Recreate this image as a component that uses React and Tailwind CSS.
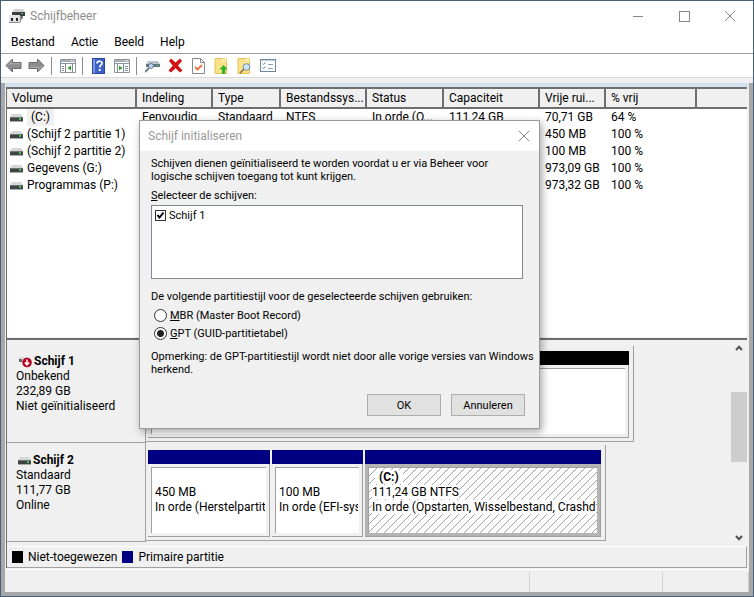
import React, { useState } from 'react';

const VOLUMES = [
  { name: '(C:)', layout: 'Eenvoudig', type: 'Standaard', fs: 'NTFS', status: 'In orde (O...', capacity: '111,24 GB', free: '70,71 GB', pct: '64 %', selected: true },
  { name: '(Schijf 2 partitie 1)', free: '450 MB', pct: '100 %' },
  { name: '(Schijf 2 partitie 2)', free: '100 MB', pct: '100 %' },
  { name: 'Gegevens (G:)', free: '973,09 GB', pct: '100 %' },
  { name: 'Programmas (P:)', free: '973,32 GB', pct: '100 %' },
];

const COLUMNS = [
  { label: 'Volume', width: 'w-[129px]' },
  { label: 'Indeling', width: 'w-[76px]' },
  { label: 'Type', width: 'w-[68px]' },
  { label: 'Bestandssys...', width: 'w-[86px]' },
  { label: 'Status', width: 'w-[77px]' },
  { label: 'Capaciteit', width: 'w-[96px]' },
  { label: 'Vrije rui...', width: 'w-[66px]' },
  { label: '% vrij', width: 'w-[91px]' },
  { label: '', width: '' },
];

// --- Icons ---
const DriveIcon = () => (
  <svg width="13" height="8" viewBox="0 0 13 8" className="shrink-0" aria-hidden="true">
    <path d="M2 0h9l2 3H0z" fill="#d4d7d7" />
    <rect y="3" width="13" height="4" fill="#3d4443" />
    <rect y="3" width="13" height="1" fill="#6d7473" />
    <rect x="9" y="4" width="2" height="2" fill="#42c04b" />
    <rect y="7" width="13" height="1" fill="#a8acac" />
  </svg>
);

const UnknownDriveIcon = () => (
  <svg width="14" height="12" viewBox="0 0 14 12" className="shrink-0" aria-hidden="true">
    <path d="M1 1h11v3H0z" fill="#dcdcdc" />
    <rect x="1" y="3" width="3" height="3" fill="#666" />
    <circle cx="9" cy="6.5" r="4.8" fill="#b4001e" />
    <path d="M9 3.4v5M6.8 6.4L9 8.8l2.2-2.4" stroke="#fff" strokeWidth="1.5" fill="none" />
  </svg>
);

const AppIcon = () => (
  <svg width="16" height="16" viewBox="0 0 16 16" aria-hidden="true">
    <path d="M5 1h9l2 3H3z" fill="#d2d2d2" />
    <path d="M3 4h13v4H3z" fill="#3b3f3f" />
    <rect x="12" y="5" width="2" height="1" fill="#37c978" />
    <path d="M0 7h11v8H0z" fill="#e3e3e3" />
    <path d="M0 14h11v1H0zM11 8h1v6h-1z" fill="#8a8a8a" />
    <path d="M2 10h2v3H2zM7 10h2v3H7z" fill="#222" />
    <path d="M12 8h2v2l-2 2z" fill="#777" />
  </svg>
);

const Arrow = ({ flip }) => (
  <svg width="17" height="15" viewBox="0 0 17 15" className={flip ? 'rotate-180' : ''} aria-hidden="true">
    <path d="M1 7.5L7.5 1v3.5H16v6H7.5V14z" fill="#8e8e8e" stroke="#6a6a6a" />
    <path d="M3 7.3L6.5 3.8v1.9H15" fill="none" stroke="#b0b0b0" />
  </svg>
);

const TreePane = ({ right }) => (
  <svg width="16" height="14" viewBox="0 0 16 14" aria-hidden="true">
    <path d="M.5 .5h15v13H.5z" fill="#fff" stroke="#8c939b" />
    <path d="M1 1h14v2H1z" fill="#a9b0b8" />
    <path d="M11 1h1v1h-1zM13 1h1v1h-1z" fill="#fff" />
    <path d="M1 4.5h14" stroke="#8693a3" />
    <path d={right ? 'M3.5 5v8M9.5 5v8M11 7.5h3M11 9.5h3M11 11.5h3' : 'M5.5 5v8M12.5 5v8M2 7.5h2M2 9.5h2M2 11.5h2'} stroke="#7b8ba0" />
    <path d={right ? 'M5 6.5v5l3.5-2.5z' : 'M11 6.5v5L7.5 9z'} fill="#35a02f" />
  </svg>
);

const HelpIcon = () => (
  <svg width="13" height="16" viewBox="0 0 13 16" aria-hidden="true">
    <rect x=".5" y=".5" width="12" height="15" fill="#3d62c5" stroke="#28479c" />
    <path d="M1 1h2v14H1z" fill="#7d99e2" />
    <path d="M5 5.4C5 2.4 10 2.6 10 5.4 10 7.3 7.6 7.2 7.6 9.6" fill="none" stroke="#fff" strokeWidth="1.7" />
    <rect x="6.7" y="11" width="2" height="2" fill="#fff" />
  </svg>
);

const ConnectIcon = () => (
  <svg width="15" height="14" viewBox="0 0 15 14" aria-hidden="true">
    <path d="M3 2h10l2 3H1z" fill="#bac4ca" />
    <path d="M1 5h14v3H1z" fill="#66747d" />
    <rect x="12" y="6" width="2" height="1" fill="#3ebd49" />
    <circle cx="6" cy="7" r="2.5" fill="#b7dbf1" stroke="#557" strokeWidth=".7" />
    <path d="M4 9l-4 4" stroke="#617986" strokeWidth="1.8" />
  </svg>
);

const DeleteIcon = () => (
  <svg width="15" height="15" viewBox="0 0 15 15" aria-hidden="true">
    <path d="M1 3l2-2.5 4.5 4L12 .5 14 3l-4 4.5 4.5 5-2.5 2-4.5-4.2L3 14.5l-2.5-2 4.3-5z" fill="#d01212" />
  </svg>
);

const CheckDocIcon = () => (
  <svg width="13" height="16" viewBox="0 0 13 16" aria-hidden="true">
    <path d="M.5 .5h8l4 4v11H.5z" fill="#fff" stroke="#85898d" />
    <path d="M8.5 .5v4h4" fill="none" stroke="#85898d" />
    <path d="M3 9l2.5 2.5L10 7" fill="none" stroke="#e4703c" strokeWidth="1.8" />
  </svg>
);

const FolderIcon = ({ search }) => (
  <svg width="15" height="16" viewBox="0 0 15 16" aria-hidden="true">
    <path d="M1 .5h11.5v15H1z" fill="#f9e28a" stroke="#e3c258" />
    <path d="M8 .5h4.5v3H8z" fill="#fcefb5" />
    {search ? (
      <g>
        <path d="M7 11l-4 4" stroke="#816f4a" strokeWidth="1.6" />
        <circle cx="9.5" cy="9" r="3.3" fill="#cee7f8" stroke="#758da4" />
      </g>
    ) : (
      <path d="M9.5 7l4.2 4.5h-2.5V16H8v-4.5H5.3z" fill="#34b425" />
    )}
  </svg>
);

const ListIcon = () => (
  <svg width="16" height="13" viewBox="0 0 16 13" aria-hidden="true">
    <rect x=".5" y=".5" width="15" height="12" fill="#fff" stroke="#73889b" />
    <path d="M1 1h14v1H1z" fill="#c3cfda" />
    <path d="M2.5 4.5l1 1 2-2M2.5 8.5l1 1 2-2" fill="none" stroke="#4389cc" />
    <path d="M8 5.5h5M8 9.5h5" stroke="#90a0ad" />
  </svg>
);

const CloseIcon = () => (
  <svg width="12" height="12" viewBox="0 0 12 12" stroke="#888" aria-hidden="true">
    <path d="M1 1l10 10M11 1L1 11" />
  </svg>
);

const Chevron = ({ down }) => (
  <svg width="8" height="6" viewBox="0 0 8 6" className={down ? 'rotate-180' : ''} aria-hidden="true">
    <path d="M1 5l3-3.2L7 5" fill="none" stroke="#505050" strokeWidth="2" />
  </svg>
);

// --- Toolbar ---
const ToolButton = ({ label, children }) => (
  <button type="button" aria-label={label} className="flex w-[23px] items-center justify-center">
    {children}
  </button>
);

const Divider = () => <span className="mr-1 ml-[3px] h-[18px] w-px bg-[#8c8c8c]" />;

const Toolbar = () => (
  <div className="flex h-6 items-center border-b border-[#d9d9d9] pl-px">
    <ToolButton label="Vorige"><Arrow /></ToolButton>
    <ToolButton label="Volgende"><Arrow flip /></ToolButton>
    <Divider />
    <ToolButton label="Structuur weergeven"><TreePane /></ToolButton>
    <Divider />
    <ToolButton label="Help"><HelpIcon /></ToolButton>
    <ToolButton label="Actievenster weergeven"><TreePane right /></ToolButton>
    <Divider />
    <ToolButton label="Vernieuwen"><ConnectIcon /></ToolButton>
    <ToolButton label="Verwijderen"><DeleteIcon /></ToolButton>
    <ToolButton label="Eigenschappen"><CheckDocIcon /></ToolButton>
    <ToolButton label="Openen"><FolderIcon /></ToolButton>
    <ToolButton label="Verkennen"><FolderIcon search /></ToolButton>
    <ToolButton label="Instellingen"><ListIcon /></ToolButton>
  </div>
);

// --- Volume list ---
const VolumeTable = () => (
  <table className="w-full table-fixed border-collapse text-left whitespace-nowrap">
    <thead>
      <tr className="h-5 border-y-2 border-[#6e6e6e] bg-[#f0f0f0]">
        {COLUMNS.map((c, i) => (
          <th key={i} className={`${c.width} overflow-hidden border-r-2 border-[#6e6e6e] pl-[5px] font-normal last:border-r-0`}>
            {c.label}
          </th>
        ))}
      </tr>
    </thead>
    <tbody>
      {VOLUMES.map((v) => (
        <tr key={v.name} className="h-[17px]">
          <td className="pl-[3px]">
            <span className="flex items-center gap-1">
              <DriveIcon />
              <span className={v.selected ? 'bg-[#f0f0f0] px-1' : ''}>{v.name}</span>
            </span>
          </td>
          <td className="pl-[6px]">{v.layout}</td>
          <td className="pl-[6px]">{v.type}</td>
          <td className="pl-[6px]">{v.fs}</td>
          <td className="pl-[6px]">{v.status}</td>
          <td className="pl-[6px]">{v.capacity}</td>
          <td className="pl-[6px]">{v.free}</td>
          <td className="pl-[6px]">{v.pct}</td>
          <td />
        </tr>
      ))}
    </tbody>
  </table>
);

// --- Graphical disk view ---
const DiskRow = ({ icon, name, lines, width, children }) => (
  <div className="flex h-[99px]">
    <div className="w-[139px] shrink-0 border-r border-b border-[#a0a0a0] pt-[10px] pl-[9px] leading-[15px]">
      <div className="flex items-center gap-[2px] pl-[2px] font-bold">{icon}{name}</div>
      {lines.map((l) => <div key={l}>{l}</div>)}
    </div>
    <div className={`${width} mt-[2px] mb-px flex gap-[2px] border-r border-b border-[#a0a0a0] pt-[5px] pr-1 pb-[3px] pl-[2px]`}>
      {children}
    </div>
  </div>
);

const Partition = ({ grow, bar, active, title, lines = [] }) => (
  <div className={`${grow} flex min-w-0 flex-col`}>
    <div className={`h-[14px] ${bar}`} />
    <div className={`flex-1 border-r border-b border-[#a0a0a0] p-[3px] ${active ? 'bg-[#b4b4b4]' : ''}`}>
      <div className={`flex h-full flex-col border-t border-l border-[#a0a0a0] bg-white pt-[2px] pr-px pl-[3px] leading-[15px] whitespace-nowrap ${active ? 'bg-[linear-gradient(135deg,#fff_0_45%,#a0a0a0_45%_55%,#fff_55%)] bg-[size:8px_8px]' : ''}`}>
        <div className="h-[15px] pl-[3px] font-bold">{title && <span className="bg-white px-1">{title}</span>}</div>
        {lines.map((l) => (
          <div key={l} className="overflow-hidden"><span className="bg-white">{l}</span></div>
        ))}
      </div>
    </div>
  </div>
);

const DiskPane = () => (
  <div className="flex">
    <div className="min-w-0 flex-1 py-1">
      <DiskRow icon={<UnknownDriveIcon />} name="Schijf 1" lines={['Onbekend', '232,89 GB', 'Niet geïnitialiseerd']} width="w-[488px]">
        <Partition grow="flex-1" bar="bg-black" />
      </DiskRow>
      <DiskRow icon={<DriveIcon />} name="Schijf 2" lines={['Standaard', '111,77 GB', 'Online']} width="w-[460px]">
        <Partition grow="w-[122px]" bar="bg-[#000080]" lines={['450 MB', 'In orde (Herstelpartit']} />
        <Partition grow="w-[91px]" bar="bg-[#000080]" lines={['100 MB', 'In orde (EFI-sys']} />
        <Partition grow="flex-1" bar="bg-[#000080]" active title="(C:)" lines={['111,24 GB NTFS', 'In orde (Opstarten, Wisselbestand, Crashdu']} />
      </DiskRow>
    </div>
    <div className="flex w-4 flex-col items-center">
      <button type="button" aria-label="Omhoog schuiven" className="flex h-4 items-center"><Chevron /></button>
      <div className="h-9" />
      <div className="h-[70px] w-full bg-[#cdcdcd]" />
      <div className="flex-1" />
      <button type="button" aria-label="Omlaag schuiven" className="flex h-4 items-center"><Chevron down /></button>
    </div>
  </div>
);

// --- Dialog ---
const InitDialog = () => {
  const [checked, setChecked] = useState(true);
  const [style, setStyle] = useState('gpt');
  const radio = 'h-[13px] w-[13px] appearance-none rounded-full border border-[#333] bg-white checked:bg-[radial-gradient(circle,#222_0_3px,#fff_4px)]';
  const button = 'h-[22px] w-[74px] border border-[#adadad] bg-[#e1e1e1]';

  return (
    <div role="dialog" aria-labelledby="init-title" className="absolute top-[119px] left-[138px] w-[401px] border border-[#9a9a9a] bg-[#f0f0f0] text-[11px] leading-[13px] shadow-[2px_3px_8px_rgba(0,0,0,0.35)]">
      <div className="flex h-[30px] items-center justify-between bg-white pr-[9px] pl-2">
        <h2 id="init-title" className="text-[12px] text-[#999]">Schijf initialiseren</h2>
        <button type="button" aria-label="Sluiten"><CloseIcon /></button>
      </div>
      <div className="pt-[6px] pb-3 pl-[11px]">
        <p>Schijven dienen geïnitialiseerd te worden voordat u er via Beheer voor<br />logische schijven toegang tot kunt krijgen.</p>
        <p className="mt-[6px]"><u>S</u>electeer de schijven:</p>
        <div className="mt-[3px] mr-4 h-[74px] border border-[#828790] bg-white p-[3px]">
          <label className="flex items-center gap-[3px]">
            <span className="relative flex">
              <input type="checkbox" checked={checked} onChange={() => setChecked(!checked)} className="h-[11px] w-[11px] appearance-none border border-[#333] bg-white" />
              {checked && (
                <svg width="11" height="11" viewBox="0 0 11 11" className="pointer-events-none absolute inset-0">
                  <path d="M2.5 5l2 2.5 4-5" fill="none" stroke="#000" strokeWidth="2" />
                </svg>
              )}
            </span>
            Schijf 1
          </label>
        </div>
        <fieldset>
          <legend className="pt-[11px]">De volgende partitiestijl voor de geselecteerde schijven gebruiken:</legend>
          <div className="flex flex-col gap-[5px] pt-[6px] pl-[3px]">
            <label className="flex items-center gap-[3px]">
              <input type="radio" name="style" checked={style === 'mbr'} onChange={() => setStyle('mbr')} className={radio} />
              <span><u>M</u>BR (Master Boot Record)</span>
            </label>
            <label className="flex items-center gap-[3px]">
              <input type="radio" name="style" checked={style === 'gpt'} onChange={() => setStyle('gpt')} className={radio} />
              <span><u>G</u>PT (GUID-partitietabel)</span>
            </label>
          </div>
        </fieldset>
        <p className="mt-[10px]">Opmerking: de GPT-partitiestijl wordt niet door alle vorige versies van Windows<br />herkend.</p>
        <div className="mt-[18px] mr-[14px] flex justify-end gap-[10px]">
          <button type="button" className={button}>OK</button>
          <button type="button" className={button}>Annuleren</button>
        </div>
      </div>
    </div>
  );
};

const App = () => (
  <div className="relative flex min-h-screen flex-col border border-[#49607c] bg-white font-[Roboto,sans-serif] text-[12px] leading-[17px] text-black">
    <header className="flex h-[30px] items-center justify-between pr-[17px] pl-2">
      <div className="flex items-center gap-[5px]">
        <AppIcon />
        <h1 className="text-[#8c8c8c]">Schijfbeheer</h1>
      </div>
      <div className="flex items-center gap-[34px]">
        <button type="button" aria-label="Minimaliseren" className="flex h-3 w-3 items-center"><span className="h-px w-[10px] bg-[#888]" /></button>
        <button type="button" aria-label="Maximaliseren" className="h-[11px] w-[11px] border border-[#888]" />
        <button type="button" aria-label="Sluiten"><CloseIcon /></button>
      </div>
    </header>
    <nav className="flex h-[23px] items-center gap-4 border-b border-[#a0a0a0] pl-[10px]">
      <button type="button">Bestand</button>
      <button type="button">Actie</button>
      <button type="button">Beeld</button>
      <button type="button">Help</button>
    </nav>
    <Toolbar />
    <div className="h-[5px] bg-[#f0f0f0]" />

    <div className="flex flex-1 flex-col border-x-4 border-b-4 border-[#a8a8a8] bg-[#f0f0f0]">
      <div className="h-1 bg-[#d5e1ee]" />
      <main className="mr-[2px] ml-px flex flex-1 flex-col border-l border-[#6e6e6e]">
        <section className="flex-1 bg-white">
          <VolumeTable />
        </section>
        <div className="h-[3px] border-b-2 border-[#6e6e6e] bg-[#f0f0f0]" />
        <DiskPane />
        <div className="flex h-[22px] items-center gap-[5px] border-t border-r border-b border-t-white border-r-[#a0a0a0] border-b-[#a0a0a0] pl-[5px]">
          <span className="h-3 w-[11px] bg-black" />
          <span>Niet-toegewezen</span>
          <span className="h-3 w-[11px] bg-[#000080]" />
          <span>Primaire partitie</span>
        </div>
      </main>
      <footer className="mt-px flex h-[23px] border-t border-white pt-[2px]">
        <div className="flex-1 border-r border-[#d0d0d0]" />
        <div className="w-[133px] border-r border-[#d0d0d0]" />
        <div className="w-[86px] border-r border-[#d0d0d0]" />
      </footer>
    </div>

    <InitDialog />
  </div>
);

export default App;
